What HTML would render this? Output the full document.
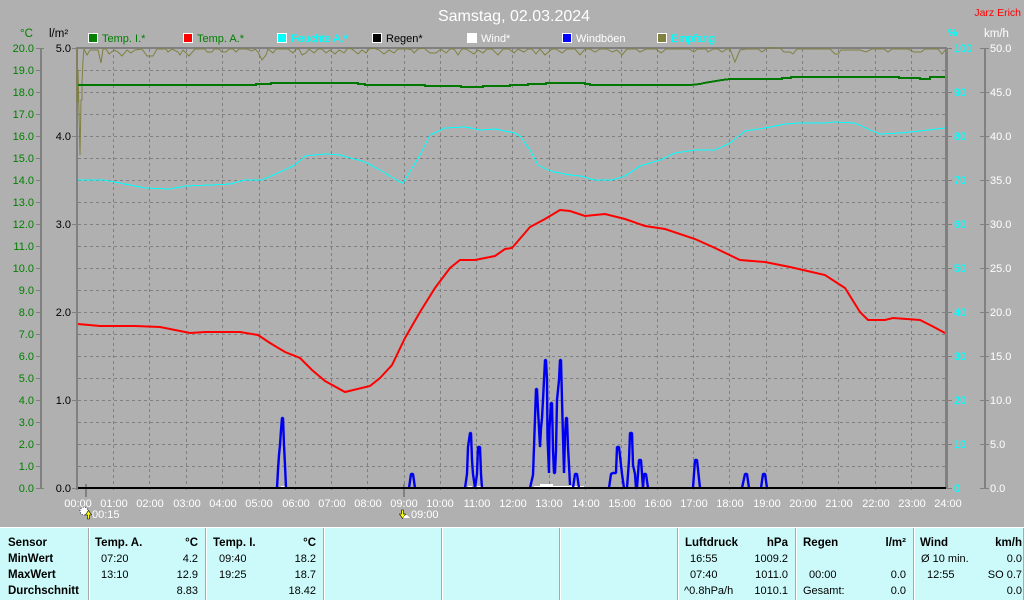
<!DOCTYPE html>
<html><head><meta charset="utf-8"><style>
html,body{margin:0;padding:0;background:#b0b0b0;width:1024px;height:600px;overflow:hidden}
svg{display:block}
text{font-family:"Liberation Sans",sans-serif;font-size:11px}
.b{font-weight:bold;font-size:11.5px;fill:#000}
.t text{fill:#000}
.r{text-anchor:end}
.m{text-anchor:middle}
.c text,.c{stroke:#0ff;stroke-width:.3}
</style></head><body>
<svg width="1024" height="600" viewBox="0 0 1024 600" xmlns="http://www.w3.org/2000/svg">
<rect width="1024" height="600" fill="#b0b0b0"/>
<text x="514" y="21" class="m" style="font-size:16px" fill="#fff">Samstag, 02.03.2024</text>
<text x="1021" y="16" class="r" style="font-size:10.5px" fill="#f00">Jarz Erich</text>
<text x="20" y="37" style="font-size:11.5px" fill="#008000">°C</text>
<text x="49" y="37" style="font-size:11.5px" fill="#000">l/m²</text>
<text x="948" y="36" style="font-size:10.5px" class="c" fill="#0ff">%</text>
<text x="984" y="37" style="font-size:11.5px" fill="#fff">km/h</text>

<g shape-rendering="crispEdges" stroke="#fff">
<rect x="88.5" y="33.5" width="9" height="9" fill="#008000"/>
<rect x="183.5" y="33.5" width="9" height="9" fill="#f00"/>
<rect x="277.5" y="33.5" width="9" height="9" fill="#0ff"/>
<rect x="372.5" y="33.5" width="9" height="9" fill="#000"/>
<rect x="467.5" y="33.5" width="9" height="9" fill="#fff"/>
<rect x="562.5" y="33.5" width="9" height="9" fill="#00f"/>
<rect x="657.5" y="33.5" width="9" height="9" fill="#808040"/>
</g>
<text x="102" y="42" fill="#008000">Temp. I.*</text>
<text x="197" y="42" fill="#008000">Temp. A.*</text>
<text x="291" y="42" class="c" fill="#0ff">Feuchte A.*</text>
<text x="386" y="42" fill="#000">Regen*</text>
<text x="481" y="42" fill="#fff">Wind*</text>
<text x="576" y="42" fill="#fff">Windböen</text>
<text x="671" y="42" class="c" fill="#0ff">Empfang</text>

<g stroke="#808080" stroke-width="1" stroke-dasharray="3 3" fill="none" shape-rendering="crispEdges">
<path d="M78 70.5H945M78 92.5H945M78 114.5H945M78 136.5H945M78 158.5H945M78 180.5H945M78 202.5H945M78 224.5H945M78 246.5H945M78 268.5H945M78 290.5H945M78 312.5H945M78 334.5H945M78 356.5H945M78 378.5H945M78 400.5H945M78 422.5H945M78 444.5H945M78 466.5H945"/>
<path d="M113.5 49V491M149.5 49V491M186.5 49V491M222.5 49V491M259.5 49V491M295.5 49V491M331.5 49V491M367.5 49V491M404.5 49V491M440.5 49V491M476.5 49V491M512.5 49V491M549.5 49V491M585.5 49V491M621.5 49V491M657.5 49V491M693.5 49V491M729.5 49V491M766.5 49V491M802.5 49V491M838.5 49V491M875.5 49V491M911.5 49V491"/>
</g>

<g fill="#808080" shape-rendering="crispEdges">
<rect x="40" y="48" width="2" height="440"/>
<rect x="984" y="48" width="2" height="440"/>
<rect x="76" y="48" width="2" height="442"/>
<rect x="76" y="47" width="871" height="2"/>
<rect x="945" y="48" width="1" height="441"/>
<rect x="946" y="48" width="2" height="441"/>
<rect x="85" y="484" width="2" height="13"/>
<rect x="403" y="484" width="2" height="13"/>
</g>
<g stroke="#808080" fill="none" shape-rendering="crispEdges">
<path d="M36 48.5h8M36 70.5h5M36 92.5h5M36 114.5h5M36 136.5h5M36 158.5h5M36 180.5h5M36 202.5h5M36 224.5h5M36 246.5h5M36 268.5h5M36 290.5h5M36 312.5h5M36 334.5h5M36 356.5h5M36 378.5h5M36 400.5h5M36 422.5h5M36 444.5h5M36 466.5h5M36 488.5h8"/>
<path d="M72 48.5h4M72 136.5h4M72 224.5h4M72 312.5h4M72 400.5h4M72 488.5h4"/>
<path d="M947 48.5h5M947 92.5h5M947 136.5h5M947 180.5h5M947 224.5h5M947 268.5h5M947 312.5h5M947 356.5h5M947 400.5h5M947 444.5h5M947 488.5h5"/>
<path d="M980 48.5h9M980 92.5h9M980 136.5h9M980 180.5h9M980 224.5h9M980 268.5h9M980 312.5h9M980 356.5h9M980 400.5h9M980 444.5h9M980 488.5h9"/>
</g>

<g class="r" fill="#008000">
<text x="34" y="52">20.0</text><text x="34" y="74">19.0</text><text x="34" y="96">18.0</text><text x="34" y="118">17.0</text><text x="34" y="140">16.0</text><text x="34" y="162">15.0</text><text x="34" y="184">14.0</text><text x="34" y="206">13.0</text><text x="34" y="228">12.0</text><text x="34" y="250">11.0</text><text x="34" y="272">10.0</text><text x="34" y="294">9.0</text><text x="34" y="316">8.0</text><text x="34" y="338">7.0</text><text x="34" y="360">6.0</text><text x="34" y="382">5.0</text><text x="34" y="404">4.0</text><text x="34" y="426">3.0</text><text x="34" y="448">2.0</text><text x="34" y="470">1.0</text><text x="34" y="492">0.0</text>
</g>
<g class="r" fill="#000">
<text x="71" y="52">5.0</text><text x="71" y="140">4.0</text><text x="71" y="228">3.0</text><text x="71" y="316">2.0</text><text x="71" y="404">1.0</text><text x="71" y="492">0.0</text>
</g>
<g class="c" fill="#0ff">
<text x="954" y="52">100</text><text x="954" y="96">90</text><text x="954" y="140">80</text><text x="954" y="184">70</text><text x="954" y="228">60</text><text x="954" y="272">50</text><text x="954" y="316">40</text><text x="954" y="360">30</text><text x="954" y="404">20</text><text x="954" y="448">10</text><text x="954" y="492">0</text>
</g>
<g fill="#fff">
<text x="990" y="52">50.0</text><text x="990" y="96">45.0</text><text x="990" y="140">40.0</text><text x="990" y="184">35.0</text><text x="990" y="228">30.0</text><text x="990" y="272">25.0</text><text x="990" y="316">20.0</text><text x="990" y="360">15.0</text><text x="990" y="404">10.0</text><text x="990" y="448">5.0</text><text x="990" y="492">0.0</text>
</g>
<g class="m" fill="#fff">
<text x="78" y="507">00:00</text><text x="114" y="507">01:00</text><text x="150" y="507">02:00</text><text x="187" y="507">03:00</text><text x="223" y="507">04:00</text><text x="259" y="507">05:00</text><text x="296" y="507">06:00</text><text x="332" y="507">07:00</text><text x="368" y="507">08:00</text><text x="404" y="507">09:00</text><text x="440" y="507">10:00</text><text x="477" y="507">11:00</text><text x="513" y="507">12:00</text><text x="549" y="507">13:00</text><text x="586" y="507">14:00</text><text x="622" y="507">15:00</text><text x="658" y="507">16:00</text><text x="694" y="507">17:00</text><text x="730" y="507">18:00</text><text x="767" y="507">19:00</text><text x="803" y="507">20:00</text><text x="839" y="507">21:00</text><text x="876" y="507">22:00</text><text x="912" y="507">23:00</text><text x="948" y="507">24:00</text>
</g>
<text x="92" y="518" fill="#fff">00:15</text>
<text x="411" y="518" fill="#fff">09:00</text>

<circle cx="84" cy="511" r="4" fill="#fff" stroke="#224" stroke-width="1" stroke-dasharray="1 1.5"/>
<path d="M88.5 510.5l3 4.5h-2v4h-2v-4h-2z" fill="#ff0" stroke="#000" stroke-width=".6"/>
<path d="M402.5 518.5l3-4.5h-2v-4h-2v4h-2z" fill="#ff0" stroke="#000" stroke-width=".6"/>
<path d="M403 518q1-3 4-3l3 3z" fill="#fff"/>

<path fill="none" stroke="#808040" stroke-width="1" d="M77 48V102H78V70L80 155L81 100H82V83L83 60L84 49L87 55L90 50H96L98 50L101 63L103 49L106 49L109 54L114 50L118 52L122 56L127 50L131 53L135 50L142 49L147 56L153 56L157 49H166L168 52L172 49L178 52L180 55L183 50L189 56L195 49H205L207 52L212 52L214 49H219L222 52L226 52L229 49H233L236 52L239 49H247L252 51L255 49L258 52L262 60L266 55L268 49L273 53L276 49H288L293 53L296 49H299L302 55L306 53L309 49L314 53L318 49H322L326 53L330 50L335 54L339 50L344 53L348 48L352 49L358 54L362 50L366 53L369 49L374 48L379 50L384 54L389 50L394 53L398 49H408L412 50L414 53L418 49L424 48L430 53H436L441 49L446 53L450 49H454L458 55L462 49L466 49L474 54L478 50L483 53L487 49H492L498 55L503 49H509L514 53L518 49L524 52L528 49H532L536 54L540 49L545 55L552 49H556L562 53L567 49H575L580 55L585 49H590L595 52L600 49H607L612 52L617 50L622 55L627 49H636L640 52L646 49H656L661 53L666 49H689L694 52L697 49H706L708 52L713 49H718L722 52L727 49H730L735 62L740 50L746 49H758L762 52L767 48H780L784 52L790 52L793 54L797 49H830L835 54H838L841 50H860L866 52L872 49H884L888 52L892 49H899L908 49L914 52H921L925 49H938L942 54L946 49"/>

<polyline fill="none" stroke="#007800" stroke-width="2" shape-rendering="crispEdges" points="78,85 256,85 256,84 271,84 271,83 358,83 358,84 365,84 365,85 425,85 425,86 461,86 461,87 483,87 483,86 510,86 510,85 528,85 528,84 546,84 546,83 585,83 585,84 590,84 590,85 690,85 700,84 704,83 710,82 716,81 722,80 730,79 782,79 782,78 791,78 791,77 899,77 899,78 920,78 920,79 930,79 930,77 945,77"/>

<polyline fill="none" stroke="#0ff" stroke-width="1" shape-rendering="crispEdges" points="78,180 103,180 115,182 130,185 145,188 170,189 185,186 210,185 230,184 245,180 262,180 280,172 295,165 305,156 325,154 340,155 365,162 380,170 400,182 403,183 420,155 430,135 445,128 465,127 480,130 495,129 515,133 520,136 530,150 538,165 548,170 555,172 570,175 580,176 595,180 612,180 625,176 640,166 660,160 675,153 695,150 715,150 730,143 745,131 765,128 785,124 800,123 825,123 835,122 855,123 870,130 880,134 900,133 920,131 945,128"/>

<polyline fill="none" stroke="#f00" stroke-width="2" points="78,324 100,326 135,326 160,327 190,333 205,332 240,332 258,335 270,343 285,352 300,358 312,370 325,381 345,392 370,386 380,378 392,365 405,338 420,312 435,288 450,268 460,260 475,260 495,256 505,249 512,248 530,227 545,219 560,210 570,211 585,216 605,214 625,219 645,226 665,229 695,239 715,248 740,260 765,262 790,267 825,275 845,288 860,312 868,320 885,320 893,318 920,320 932,326 945,333"/>

<path fill="none" stroke="#fff" stroke-width="2" shape-rendering="crispEdges" d="M281 487h4M468 487h4M477 487h4M534 487h50M540 485h13"/>

<g fill="none" stroke="#0000f0" stroke-width="2.4" stroke-linejoin="bevel">
<polyline points="277,488 278,470 279,455 280,445 281,430 282,418 283,418 284,445 285,465 286,488"/>
<polyline points="409,488 411,474 413,474 415,488"/>
<polyline points="465,488 467,474 468,447 470,433 471,433 472,460 473,474 475,488 477,474 478,447 480,447 481,474 482,488"/>
<polyline points="530,488 533,475 534,447 535,418 536,389 537,389 538,410 539,428 540,447 541,428 542,418 543,400 544,380 545,360 546,360 547,380 547.5,437 549,473 549.5,428 551,403 552,403 553,450 554,473 555,473 556,450 557,400 559,380 560,360 561,360 562,400 563,437 564,473 565,437 566,418 567,418 568,447 569,465 570,485"/>
<polyline points="573,488 575,474 577,474 579,488"/>
<polyline points="609,488 611,474 613,473 616,473 617,447 619,447 621,465 622,474 624,488"/>
<polyline points="627,488 629,460 630,433 632,433 633,465 635,474 636,488 637,488 639,460 641,460 642,474 643,488 644,474 646,474 648,488"/>
<polyline points="693,488 695,460 697,460 700,488"/>
<polyline points="742,488 745,474 747,474 749,488"/>
<polyline points="761,488 763,474 765,474 767,488"/>
</g>

<rect x="78" y="487" width="868" height="2" fill="#000" shape-rendering="crispEdges"/>

<rect x="0" y="527" width="1024" height="73" fill="#ccfafa"/>
<g shape-rendering="crispEdges">
<rect x="0" y="527" width="1024" height="1" fill="#fff"/>
<g fill="#a8a8a8">
<rect x="88" y="528" width="1" height="72"/><rect x="205" y="528" width="1" height="72"/><rect x="323" y="528" width="1" height="72"/><rect x="441" y="528" width="1" height="72"/><rect x="559" y="528" width="1" height="72"/><rect x="677" y="528" width="1" height="72"/><rect x="795" y="528" width="1" height="72"/><rect x="913" y="528" width="1" height="72"/><rect x="1023" y="528" width="1" height="72"/>
</g>
<g fill="#fff">
<rect x="89" y="528" width="1" height="72"/><rect x="206" y="528" width="1" height="72"/><rect x="324" y="528" width="1" height="72"/><rect x="442" y="528" width="1" height="72"/><rect x="560" y="528" width="1" height="72"/><rect x="678" y="528" width="1" height="72"/><rect x="796" y="528" width="1" height="72"/><rect x="914" y="528" width="1" height="72"/>
</g>
</g>
<g class="t">
<text x="8" y="546" class="b">Sensor</text><text x="8" y="562" class="b">MinWert</text><text x="8" y="578" class="b">MaxWert</text><text x="8" y="594" class="b">Durchschnitt</text>

<text x="95" y="546" class="b">Temp. A.</text><text x="198" y="546" class="b r">°C</text>
<text x="101" y="562">07:20</text><text x="198" y="562" class="r">4.2</text>
<text x="101" y="578">13:10</text><text x="198" y="578" class="r">12.9</text>
<text x="198" y="594" class="r">8.83</text>

<text x="213" y="546" class="b">Temp. I.</text><text x="316" y="546" class="b r">°C</text>
<text x="219" y="562">09:40</text><text x="316" y="562" class="r">18.2</text>
<text x="219" y="578">19:25</text><text x="316" y="578" class="r">18.7</text>
<text x="316" y="594" class="r">18.42</text>

<text x="685" y="546" class="b">Luftdruck</text><text x="788" y="546" class="b r">hPa</text>
<text x="690" y="562">16:55</text><text x="788" y="562" class="r">1009.2</text>
<text x="690" y="578">07:40</text><text x="788" y="578" class="r">1011.0</text>
<text x="684" y="594">^0.8hPa/h</text><text x="788" y="594" class="r">1010.1</text>

<text x="803" y="546" class="b">Regen</text><text x="906" y="546" class="b r">l/m²</text>
<text x="809" y="578">00:00</text><text x="906" y="578" class="r">0.0</text>
<text x="803" y="594">Gesamt:</text><text x="906" y="594" class="r">0.0</text>

<text x="920" y="546" class="b">Wind</text><text x="1022" y="546" class="b r">km/h</text>
<text x="921" y="562">Ø 10 min.</text><text x="1022" y="562" class="r">0.0</text>
<text x="927" y="578">12:55</text><text x="1022" y="578" class="r">SO 0.7</text>
<text x="1022" y="594" class="r">0.0</text>
</g>
</svg>
</body></html>
